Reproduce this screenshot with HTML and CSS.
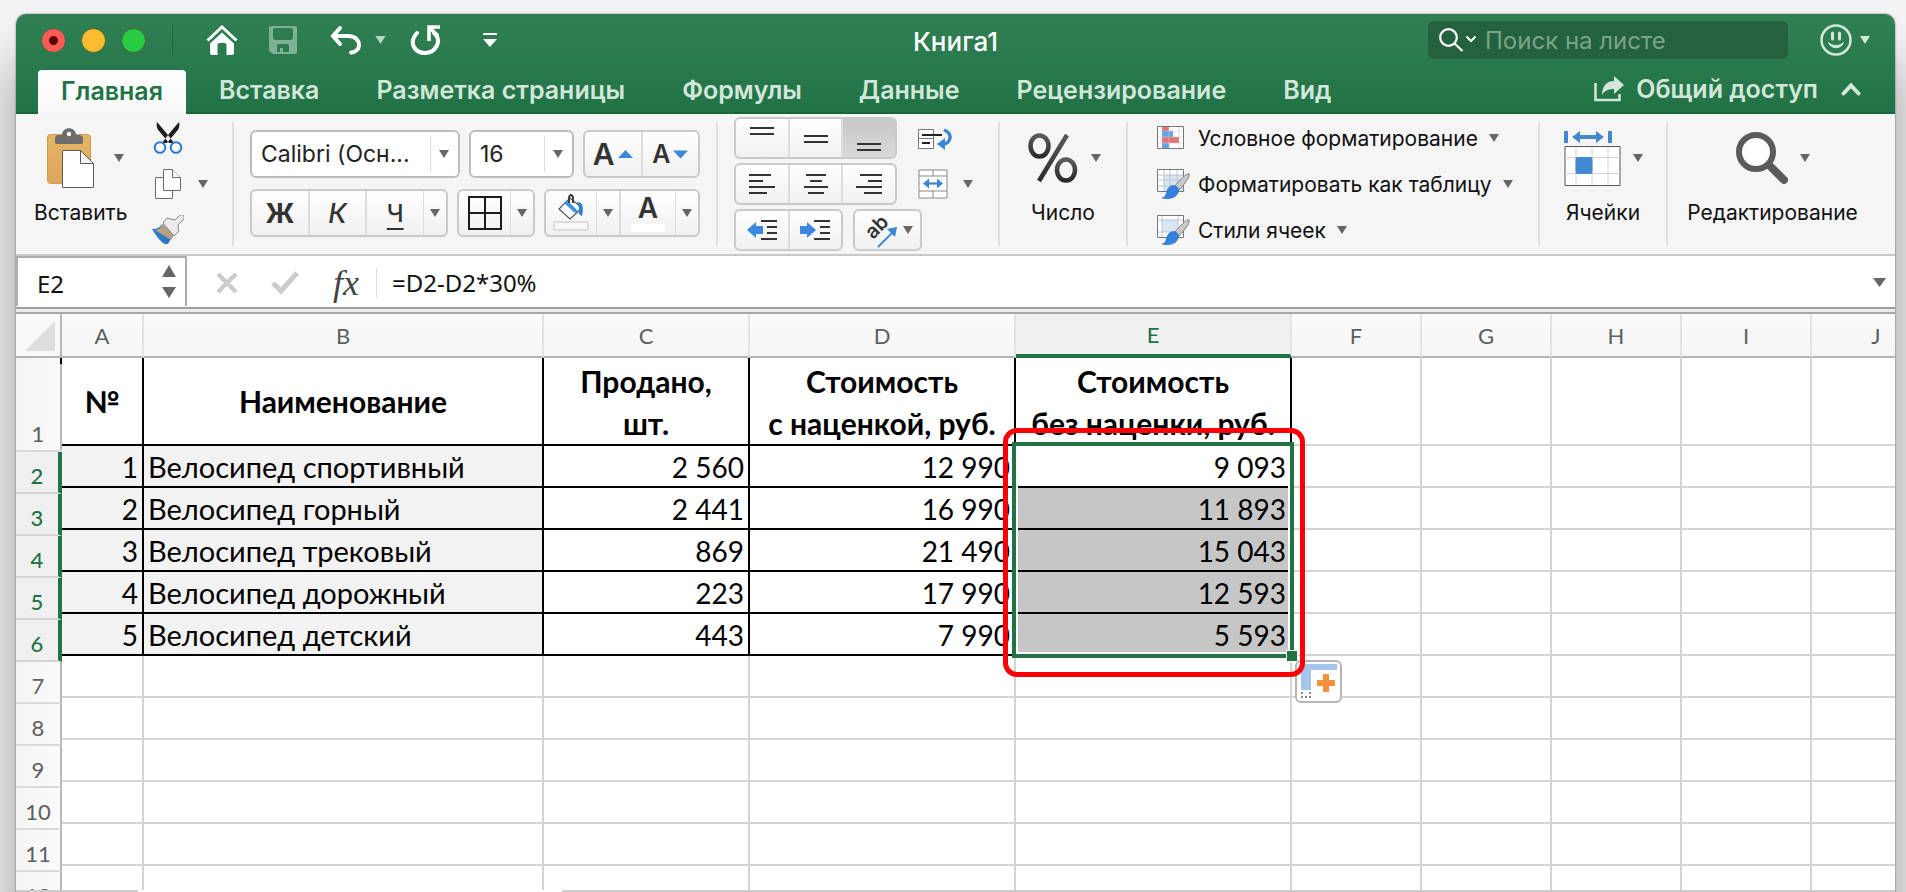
FILE: index.html
```html
<!DOCTYPE html>
<html lang="ru">
<head>
<meta charset="utf-8">
<title>Книга1</title>
<link rel="stylesheet" href="styles.css">
</head>
<body>
<svg width="0" height="0" class="defs" aria-hidden="true">
  <symbol id="tri" viewBox="0 0 10 8"><path d="M0 0h10L5 8z" fill="currentColor"/></symbol>
  <linearGradient id="dark" x1="0" y1="0" x2="0" y2="1"><stop offset="0" stop-color="#5a5a5a"/><stop offset="1" stop-color="#2c2c2c"/></linearGradient>
  <linearGradient id="tan" x1="0" y1="0" x2="0" y2="1"><stop offset="0" stop-color="#e6b467"/><stop offset="1" stop-color="#dba75a"/></linearGradient>
  <symbol id="brush" viewBox="0 0 30 28">
    <path d="M29 1c2 2-7 14-11 17l-4-4C18 9 27-1 29 1z" fill="#c9c9c9" stroke="#7d7d7d" stroke-width="1"/>
    <path d="M13 13c3 0 6 3 5 6-1 6-8 9-17 7 4-1 4-4 5-7 1-4 4-6 7-6z" fill="#3382dd" stroke="#2b6cba" stroke-width=".6"/>
  </symbol>
</svg>
<div class="window">
  <header class="titlebar">
    <div class="top-row">
      <div class="lights">
        <button class="light red" aria-label="Закрыть"></button>
        <button class="light yellow" aria-label="Свернуть"></button>
        <button class="light green" aria-label="Развернуть"></button>
      </div>
      <div class="quick">
        <button aria-label="Домой"><svg width="32" height="30" viewBox="0 0 32 30" fill="none"><path d="M1.500 15.500 16 2l14.500 13.500" stroke="#fff" stroke-width="3"/><path d="M4 18.500 16 7.500l12 11V28q0 2-2 2h-5.500V20q0-2-2-2h-5q-2 0-2 2v10H6q-2 0-2-2z" fill="#fff"/></svg></button>
        <button class="save" aria-label="Сохранить"><svg width="28" height="28" viewBox="0 0 28 28"><path fill-rule="evenodd" d="M2 0h24q2 0 2 2v24q0 2-2 2H4l-4-3V2q0-2 2-2zM6 2Q4 2 4 4v7q0 3 3 3h14q3 0 3-3V4q0-2-2-2zM8 20v6h3v-4h3v4h6v-6q0-2-2-2h-8q-2 0-2 2z" fill="#7eb096"/></svg></button>
        <button class="undo" aria-label="Отменить"><svg width="32" height="30" viewBox="0 0 32 30" fill="none" stroke="#fff" stroke-width="4" stroke-linecap="round"><path d="M10 3 3 11l7 8M4 11h14c8 0 11 5 11 9s-3 7-8 7.500"/></svg></button>
        <button class="undo-menu" aria-label="История отмены"><svg width="11" height="8"><use href="#tri"/></svg></button>
        <button class="redo" aria-label="Повторить"><svg width="32" height="30" viewBox="0 0 32 30" fill="none" stroke="#fff" stroke-width="4"><path d="M7 8c-9 10-2 20 8 20s18-12 9-20"  stroke-linecap="round"/><path d="M30 2H19v14M20 3l8 8" stroke-width="3.600"/></svg></button>
        <button class="more" aria-label="Настройка панели"><svg width="14" height="14" viewBox="0 0 14 14"><path d="M0 0h14v2H0zM0 6h14l-7 8z" fill="#fff"/></svg></button>
      </div>
      <h1>Книга1</h1>
      <label class="search">
        <svg width="38" height="24" viewBox="0 0 38 24" fill="none" stroke="#fff" stroke-width="2.200"><circle cx="9.500" cy="9.500" r="8.300"/><path d="m15.500 15.500 8 7.500"/><path d="m27.500 8.500 4.500 4.500 4.500-4.500" stroke-width="2"/></svg>
        <input type="search" placeholder="Поиск на листе" aria-label="Поиск на листе">
      </label>
      <button class="smile" aria-label="Отзыв"><svg width="32" height="32" viewBox="0 0 32 32" fill="none" stroke="#d3e6da" stroke-width="2.500"><circle cx="16" cy="16" r="14.500"/><path d="M12.500 9v6M19.500 9v6" stroke-width="3" stroke-linecap="round"/><path d="M8.500 18.500c2 7 13 7 15 0-4 4-11 4-15 0z" fill="#d3e6da" stroke-width="1" stroke-linejoin="round"/></svg><svg width="10" height="8"><use href="#tri"/></svg></button>
    </div>
    <nav class="tabs">
      <button class="tab active">Главная</button>
      <button class="tab">Вставка</button>
      <button class="tab">Разметка страницы</button>
      <button class="tab">Формулы</button>
      <button class="tab">Данные</button>
      <button class="tab">Рецензирование</button>
      <button class="tab">Вид</button>
      <button class="share"><svg width="30" height="26" viewBox="0 0 30 26"><path d="M1.500 7v17h24v-6" fill="none" stroke="#d3e6da" stroke-width="2.500"/><path d="M20 0l10 9-10 9v-5c-6 0-10 2-12 6 0-8 4-14 12-14z" fill="#d3e6da"/></svg>Общий доступ</button>
      <button class="collapse" aria-label="Свернуть ленту"><svg width="20" height="14" viewBox="0 0 20 14"><path d="m2.500 11.500 7.500-8 7.500 8" fill="none" stroke="#d3e6da" stroke-width="4" stroke-linecap="round"/></svg></button>
    </nav>
  </header>

  <section class="ribbon" aria-label="Главная">
    <div class="group clipboard">
      <button class="big"><span class="pic"><svg width="48" height="60" viewBox="0 0 48 60"><rect x=".5" y="6.500" width="43" height="49" rx="3" fill="url(#tan)" stroke="#cf9a4c"/><path d="M8 15V11q0-4 4-4h3c0-9 14-9 14 0h3q4 0 4 4v4q0 1-2 1H10q-2 0-2-1z" fill="#6d6d6d"/><circle cx="22" cy="6" r="2.200" fill="#fff"/><path d="M15.500 22.500h18l13 13v24h-31z" fill="#fff" stroke="#5a5a5a"/><path d="M33.500 22.500v13h13z" fill="#f4f4f4" stroke="#5a5a5a"/></svg><svg class="arrow" width="10" height="8"><use href="#tri"/></svg></span>Вставить</button>
      <div class="mini">
        <button aria-label="Вырезать"><svg width="32" height="32" viewBox="0 0 32 32"><path d="M5 0C4 3 5 7 7 9l10 12h5L16 13zM27 0c1 3 0 7-2 9L15 21h-5l6-8z" fill="#1d1d1d"/><g fill="#fff" stroke="#2f7ad1" stroke-width="2"><circle cx="8" cy="25.500" r="5.300"/><circle cx="24" cy="25.500" r="5.300"/></g></svg></button>
        <button aria-label="Копировать"><svg width="32" height="32" viewBox="0 0 32 32" fill="#fff" stroke="#6a6a6a"><path d="M3.500 9.500h17v21h-17z"/><path d="M11.500 1.500h9l8 8v13h-17z"/><path d="M20.500 1.500v8h8"/></svg><svg class="arrow" width="10" height="8"><use href="#tri"/></svg></button>
        <button aria-label="Формат по образцу"><svg width="32" height="30" viewBox="0 0 32 30"><path d="M0 14c4 0 8-1 10-5l11 11c-1 4-4 6-5 9-4 0-4 0-6-2C6 24 4 20 0 14z" fill="#2e79c6"/><path d="M3 15c4 0 6-3 8-6l11 11-3 5z" fill="#b5a084"/><path d="m11 8 4-5q6 2 8 2l4-4c3-3 7 0 4 4l-5 5q0 5 1 6l-5 5z" fill="#ececec" stroke="#858585"/></svg></button>
      </div>
    </div>
    <i class="sep"></i>
    <div class="group font">
      <div class="line">
        <span class="combo name"><select aria-label="Шрифт"><option>Calibri (Осн...</option></select><svg class="arrow" width="10" height="8"><use href="#tri"/></svg></span>
        <span class="combo size"><select aria-label="Размер"><option>16</option></select><svg class="arrow" width="10" height="8"><use href="#tri"/></svg></span>
        <div class="set sized">
          <button aria-label="Увеличить шрифт"><b class="grow">A</b><svg width="15" height="8" viewBox="0 0 15 8"><path d="M0 8 7.500 0 15 8z" fill="#3b87d6"/></svg></button>
          <button aria-label="Уменьшить шрифт"><b class="shrink">A</b><svg width="15" height="9" viewBox="0 0 15 8"><path d="M0 0h15L7.500 8z" fill="#3b87d6"/></svg></button>
        </div>
      </div>
      <div class="line">
        <div class="set style">
          <button><b>Ж</b></button><button><em>К</em></button><button><u>Ч</u></button><button class="drop" aria-label="Подчёркивание"><svg class="arrow" width="10" height="8"><use href="#tri"/></svg></button>
        </div>
        <div class="set borders">
          <button aria-label="Границы"><svg width="34" height="34" viewBox="0 0 34 34"><path d="M1 1h32v32H1zM17 1v32M1 17h32" fill="none" stroke="#1b1b1b" stroke-width="2"/></svg></button><button class="drop" aria-label="Выбор границ"><svg class="arrow" width="10" height="8"><use href="#tri"/></svg></button>
        </div>
        <div class="set colors">
          <button aria-label="Цвет заливки"><svg width="36" height="38" viewBox="0 0 36 38"><path d="m6 15 11-11 12 10-12 11z" fill="#fff" stroke="#555" stroke-width="1.200"/><path d="m11 9 11 10 3-2L14 6z" fill="#3d93dd"/><path d="M24 8c6 0 7 6 5 14-3-1-4-3-3-8z" fill="#2f7fd3"/><path d="M16 9V3q2-4 4 0v6" fill="none" stroke="#333" stroke-width="1.800"/><rect x="1" y="28" width="34" height="8" rx="1" fill="#f7f7f7" stroke="#d5d5d5" stroke-width="1.500"/></svg></button><button class="drop" aria-label="Выбор заливки"><svg class="arrow" width="10" height="8"><use href="#tri"/></svg></button>
          <button class="ink" aria-label="Цвет текста"><b>A</b><i></i></button><button class="drop" aria-label="Выбор цвета текста"><svg class="arrow" width="10" height="8"><use href="#tri"/></svg></button>
        </div>
      </div>
    </div>
    <i class="sep"></i>
    <div class="group align">
      <div class="line">
        <div class="set tri3">
          <button aria-label="По верхнему краю"><svg width="26" height="42" viewBox="0 0 26 42"><path d="M1 11h24M1 17h24" stroke="#333" stroke-width="2"/></svg></button><button aria-label="По середине"><svg width="26" height="42" viewBox="0 0 26 42"><path d="M1 19h24M1 25h24" stroke="#333" stroke-width="2"/></svg></button><button class="on" aria-label="По нижнему краю"><svg width="26" height="42" viewBox="0 0 26 42"><path d="M1 27h24M1 33h24" stroke="#333" stroke-width="2"/></svg></button>
        </div>
        <button class="plain" aria-label="Перенос текста"><svg width="34" height="24" viewBox="0 0 34 24"><path d="M.5 3.500h15v19H.5zM.5 12.500h15" fill="#fff" stroke="#777"/><path d="M4 9h20M4 17h8" stroke="#222" stroke-width="2"/><path d="M26 4c10 4 6 14-1 14" fill="none" stroke="#3b87d6" stroke-width="3.500"/><path d="m19 18 8-6v12z" fill="#3b87d6"/></svg></button>
      </div>
      <div class="line">
        <div class="set tri3">
          <button aria-label="По левому краю"><svg width="26" height="22" viewBox="0 0 26 22"><path d="M0 2h22M0 8h14M0 14h26M0 20h18" stroke="#333" stroke-width="2"/></svg></button><button aria-label="По центру"><svg width="26" height="22" viewBox="0 0 26 22"><path d="M3 2h20M7 8h12M1 14h24M5 20h16" stroke="#333" stroke-width="2"/></svg></button><button aria-label="По правому краю"><svg width="26" height="22" viewBox="0 0 26 22"><path d="M4 2h22M12 8h14M0 14h26M8 20h18" stroke="#333" stroke-width="2"/></svg></button>
        </div>
        <button class="plain" aria-label="Объединить ячейки"><svg width="30" height="30" viewBox="0 0 30 30"><path d="M1 1h28v28H1zM1 7h28M1 22h28M15 1v6M15 22v7" fill="#fff" stroke="#888"/><path d="M8 14.500h14" stroke="#3b87d6" stroke-width="2.200"/><path d="m5 14.500 6-5v10zM25 14.500l-6-5v10z" fill="#3b87d6"/></svg><svg class="arrow" width="10" height="8"><use href="#tri"/></svg></button>
      </div>
      <div class="line">
        <div class="set two">
          <button aria-label="Уменьшить отступ"><svg width="30" height="22" viewBox="0 0 30 22"><path d="M0 11 9 3v4h7v8H9v4z" fill="#3b87e2"/><path d="M14 2h16M20 8h10M20 14h10M14 20h16" stroke="#333" stroke-width="2"/></svg></button><button aria-label="Увеличить отступ"><svg width="30" height="22" viewBox="0 0 30 22"><path d="M16 11 7 3v4H0v8h7v4z" fill="#3b87e2"/><path d="M14 2h16M20 8h10M20 14h10M14 20h16" stroke="#333" stroke-width="2"/></svg></button>
        </div>
        <div class="set turn">
          <button aria-label="Ориентация"><svg width="36" height="36" viewBox="0 0 36 36"><text x="11" y="28" transform="rotate(-45 11 28)" class="ab">ab</text><path d="m16 35 15-15" stroke="#3b87d6" stroke-width="2"/><path d="M35 15 25 17l8 8z" fill="#3b87d6"/></svg><svg class="arrow" width="10" height="8"><use href="#tri"/></svg></button>
        </div>
      </div>
    </div>
    <i class="sep"></i>
    <div class="group number">
      <button class="big"><span class="pic"><svg width="50" height="50" viewBox="0 0 50 50" fill="none" stroke="url(#dark)"><ellipse cx="11.500" cy="13" rx="9" ry="10.500" stroke-width="4.500"/><ellipse cx="38" cy="37" rx="9" ry="10.500" stroke-width="4.500"/><path d="M39 2 11 48" stroke-width="4.500"/></svg><svg class="arrow" width="10" height="8"><use href="#tri"/></svg></span>Число</button>
    </div>
    <i class="sep"></i>
    <div class="group styles">
      <button><svg width="34" height="32" viewBox="0 0 34 32"><path d="M1 4h27v23H1z" fill="#fff"/><path d="M6 4h7v5H6zM6 15h17v6H6z" fill="#e87070"/><path d="M6 9h11v6H6zM6 21h7v6H6z" fill="#5ba4ea"/><path d="M6 4v23M13 4v23M23 4v23M1 9h27M1 15h27M1 21h27" stroke="#c9c9c9" stroke-width=".6"/><path d="M1.500 4.500h26v22h-26z" fill="none" stroke="#777"/></svg>Условное форматирование<svg class="arrow" width="10" height="8"><use href="#tri"/></svg></button>
      <button><svg width="34" height="32" viewBox="0 0 34 32"><path d="M1.500 1.500h26v22h-26z" fill="#fff" stroke="#777"/><path d="M8 7h19v16H8z" fill="#d7e5f4"/><path d="M8 2v21M14 2v21M21 2v21M2 7h25M2 12h25M2 18h25" stroke="#bcc6cf"/><use href="#brush" x="5" y="5" width="29" height="27"/></svg>Форматировать как таблицу<svg class="arrow" width="10" height="8"><use href="#tri"/></svg></button>
      <button><svg width="34" height="32" viewBox="0 0 34 32"><path d="M1.500 1.500h26v22h-26z" fill="#fff" stroke="#777"/><path d="M6 6h16v12H6z" fill="#d7e5f4"/><path d="M6 2v21M22 2v21M2 6h25M2 18h25" stroke="#bcc6cf"/><use href="#brush" x="5" y="5" width="29" height="27"/></svg>Стили ячеек<svg class="arrow" width="10" height="8"><use href="#tri"/></svg></button>
    </div>
    <i class="sep"></i>
    <div class="group cells">
      <button class="big"><span class="pic"><svg width="58" height="58" viewBox="0 0 58 58"><path d="M1 2h4v12H1zM45 2h4v12h-4zM9 8l8-6v4h16V2l8 6-8 6v-4H17v4z" fill="#4389cf"/><path d="M2 17.500h55v39H2z" fill="#fff" stroke="#555"/><path d="M13 18v38M29 18v38M45 18v38M2 28.500h55M2 44.500h55" stroke="#d2d2d2"/><rect x="12.500" y="28" width="17" height="17" rx="2" fill="#4389cf"/></svg><svg class="arrow" width="10" height="8"><use href="#tri"/></svg></span>Ячейки</button>
    </div>
    <i class="sep"></i>
    <div class="group edit">
      <button class="big"><span class="pic"><svg width="52" height="54" viewBox="0 0 52 54" fill="none" stroke="#5b5b5b"><path d="M35 36 48 49" stroke-width="8" stroke-linecap="round"/><circle cx="20" cy="21" r="17" stroke-width="6" fill="#fff"/></svg><svg class="arrow" width="10" height="8"><use href="#tri"/></svg></span>Редактирование</button>
    </div>
  </section>

  <section class="formula-bar">
    <div class="namebox"><input value="E2" aria-label="Имя ячейки"><button aria-label="Список имён"><svg width="14" height="34" viewBox="0 0 14 34"><path d="M7 0l7 12H0zM0 22h14L7 33z" fill="#666"/></svg></button></div>
    <button class="cancel" aria-label="Отмена"><svg width="24" height="24" viewBox="0 0 24 24"><path d="m3 3 18 18M21 3 3 21" stroke="#ccc" stroke-width="4.500"/></svg></button>
    <button class="enter" aria-label="Ввод"><svg width="28" height="24" viewBox="0 0 28 24"><path d="m2 12 8 8L26 2" fill="none" stroke="#ccc" stroke-width="5"/></svg></button>
    <button class="fx" aria-label="Вставить функцию"><i>fx</i></button>
    <input class="formula" value="=D2-D2*30%" aria-label="Строка формул">
    <button class="expand" aria-label="Развернуть строку"><svg width="13" height="9" viewBox="0 0 10 8" preserveAspectRatio="none"><path d="M0 0h10L5 8z" fill="#666"/></svg></button>
  </section>

  <main class="sheet">
    <div class="rows">
      <div class="corner"><svg width="30" height="30" viewBox="0 0 30 30"><path d="M30 0v30H0z" fill="#dedede"/></svg></div>
      <ol>
        <li class="first">1</li><li class="sel">2</li><li class="sel">3</li><li class="sel">4</li><li class="sel">5</li><li class="sel">6</li><li>7</li><li>8</li><li>9</li><li>10</li><li>11</li><li>12</li>
      </ol>
    </div>
    <div class="grid">
      <table>
        <colgroup><col class="ca"><col class="cb"><col class="cc"><col class="cd"><col class="ce"><col><col><col><col><col></colgroup>
        <thead><tr><th>A</th><th>B</th><th>C</th><th>D</th><th class="sel">E</th><th>F</th><th>G</th><th>H</th><th>I</th><th>J</th></tr></thead>
        <tbody>
          <tr class="head"><td class="mid">№</td><td class="mid">Наименование</td><td>Продано,<br>шт.</td><td>Стоимость<br>с наценкой, руб.</td><td>Стоимость<br>без наценки, руб.</td><td></td><td></td><td></td><td></td><td></td></tr>
          <tr class="data"><td>1</td><td>Велосипед спортивный</td><td>2 560</td><td>12 990</td><td class="anchor">9 093<div class="selection"><i></i></div><button class="autofill" aria-label="Параметры автозаполнения"><svg width="38" height="36" viewBox="0 0 38 36"><path d="M0 0h36v6H10v20H0z" fill="#a3c4ec"/><path d="M16 16h6v-6h6v6h6v6h-6v6h-6v-6h-6z" fill="#f5913c"/><path d="M0 28h2v2H0zM4 32h2v2H4zM0 32h2v2H0zM8 32h2v2H8zM8 28h2v2H8z" fill="#888"/></svg></button><div class="callout"></div></td><td></td><td></td><td></td><td></td><td></td></tr>
          <tr class="data"><td>2</td><td>Велосипед горный</td><td>2 441</td><td>16 990</td><td class="picked">11 893</td><td></td><td></td><td></td><td></td><td></td></tr>
          <tr class="data"><td>3</td><td>Велосипед трековый</td><td>869</td><td>21 490</td><td class="picked">15 043</td><td></td><td></td><td></td><td></td><td></td></tr>
          <tr class="data"><td>4</td><td>Велосипед дорожный</td><td>223</td><td>17 990</td><td class="picked">12 593</td><td></td><td></td><td></td><td></td><td></td></tr>
          <tr class="data"><td>5</td><td>Велосипед детский</td><td>443</td><td>7 990</td><td class="picked">5 593</td><td></td><td></td><td></td><td></td><td></td></tr>
          <tr><td></td><td></td><td></td><td></td><td></td><td></td><td></td><td></td><td></td><td></td></tr>
          <tr><td></td><td></td><td></td><td></td><td></td><td></td><td></td><td></td><td></td><td></td></tr>
          <tr><td></td><td></td><td></td><td></td><td></td><td></td><td></td><td></td><td></td><td></td></tr>
          <tr><td></td><td></td><td></td><td></td><td></td><td></td><td></td><td></td><td></td><td></td></tr>
          <tr><td></td><td></td><td></td><td></td><td></td><td></td><td></td><td></td><td></td><td></td></tr>
          <tr><td></td><td></td><td></td><td></td><td></td><td></td><td></td><td></td><td></td><td></td></tr>
        </tbody>
      </table>
    </div>
  </main>
  <div class="bottom-edge"><i></i><i></i></div>
</div>
</body>
</html>
```

FILE: styles.css
```css
* { box-sizing: border-box; }
body {
  margin: 0;
  height: 100vh;
  padding: 14px 11px 0 16px;
  overflow: hidden;
  background: #f3f2f4;
  font-family: Inter, "Noto Sans", sans-serif;
  color: #111;
}
button {
  margin: 0;
  padding: 0;
  border: 0;
  background: none;
  font: inherit;
  color: inherit;
  display: flex;
  align-items: center;
  justify-content: center;
}
svg { display: block; flex: none; }
input, select { font: inherit; color: inherit; border: 0; padding: 0; background: none; outline: 0; min-width: 0; }
.defs { position: absolute; }
.window {
  height: 100%;
  display: flex;
  flex-direction: column;
  background: #fff;
  border-radius: 10px 10px 0 0;
  box-shadow: 0 0 2px rgba(0, 0, 0, .6), 0 60px 50px 12px rgba(0, 0, 0, .26);
}

/* Title bar */
.titlebar {
  background: linear-gradient(#308054, #217346);
  border-bottom: 2px solid #1b6339;
  border-radius: 10px 10px 0 0;
  color: #d3e6da;
}
.top-row { position: relative; display: flex; align-items: center; height: 52px; padding: 0 25px 0 25px; }
.lights { display: flex; gap: 15px; padding-right: 26px; margin-right: 33px; border-right: 1px solid #24663f; height: 30px; align-items: center; }
.light { width: 25px; height: 25px; border-radius: 50%; border: 1px solid #3e6b3d; }
.red { background: radial-gradient(circle, #5a0000 4px, #fc5b56 5px); }
.yellow { background: #fdbc2f; }
.green { background: #28cb42; }
.quick { display: flex; align-items: center; color: #b9d6c5; }
.save { margin-left: 31px; }
.undo { margin-left: 33px; }
.undo-menu { margin-left: 13px; }
.redo { margin-left: 24px; }
.more { margin-left: 41px; color: #fff; }
h1 {
  position: absolute;
  left: 0;
  right: 0;
  text-align: center;
  margin: 0;
  padding-top: 3px;
  font-size: 26px;
  line-height: 30px;
  font-weight: 500;
  color: #fff;
  pointer-events: none;
}
.search {
  display: flex;
  align-items: center;
  gap: 8px;
  margin-left: auto;
  width: 360px;
  height: 38px;
  padding: 0 11px;
  border-radius: 6px;
  background: #24613f;
}
.search input { flex: 1; font-size: 24px; color: #fff; appearance: none; }
.search input::placeholder { color: #79a489; opacity: 1; }
.smile { gap: 8px; margin-left: 32px; }
.tabs { display: flex; align-items: stretch; gap: 1px; height: 46px; padding: 0 34px 0 22px; font-size: 25px; font-weight: 600; }
.tab { padding: 2px 28px 0; }
.tab.active { color: #217346; background: linear-gradient(#fff, #f8f8f8); border-radius: 4px 4px 0 0; padding: 0 23px 2px; margin: 4px 4px -2px 0; }
.share { gap: 12px; margin-left: auto; }
.collapse { margin-left: 22px; }

/* Ribbon */
.ribbon { display: flex; align-items: center; height: 142px; background: #f5f5f5; border-bottom: 2px solid #c8c8c8; color: #111; font-size: 21px; }
.sep { width: 2px; height: 124px; background: #e0e0e0; flex: none; }
.group { height: 138px; flex: none; }
.arrow { color: #666; }
.big { flex-direction: column; line-height: 26px; padding-top: 12px; }
.pic { display: flex; align-items: center; gap: 12px; height: 62px; margin-bottom: 11px; }
.clipboard { width: 216px; display: flex; padding-left: 18px; align-items: flex-start; }
.clipboard .pic { gap: 19px; padding-left: 9px; }
.mini { margin-left: 25px; display: flex; flex-direction: column; }
.mini button { height: 46px; gap: 14px; justify-content: flex-start; }
.font { width: 482px; padding: 15px 0 0 16px; display: flex; flex-direction: column; gap: 11px; }
.line { display: flex; gap: 9px; }
.font .line { height: 48px; }
.combo { position: relative; display: flex; align-items: center; height: 48px; background: #fff; border: 2px solid #bdbdbd; border-radius: 6px; }
.combo select { appearance: none; width: 100%; height: 100%; padding-left: 9px; font-size: 23px; color: #222; }
.combo .arrow { position: absolute; right: 9px; pointer-events: none; }
.combo::after { content: ""; position: absolute; right: 27px; top: 4px; bottom: 4px; width: 1px; background: #ddd; pointer-events: none; }
.name { width: 210px; }
.size { width: 105px; }
.set { display: flex; border: 2px solid #cacaca; border-radius: 6px; background: linear-gradient(#fefefe, #f1f1f1); color: #333; overflow: hidden; }
.set button { flex: 1; }
.set button + button { border-left: 2px solid #dcdcdc; }
.set .drop { flex: none; width: 23px; }
.set button + .drop { border-left: 1px solid #ddd; }
.sized { width: 117px; }
.sized button { gap: 3px; }
.grow { font-size: 30px; font-weight: 600; }
.shrink { font-size: 25px; font-weight: 600; }
.style { width: 198px; font-size: 27px; }
.style em { font-weight: 500; }
.style u { font-weight: 500; font-size: 24px; text-underline-offset: 6px; text-decoration-thickness: 2px; }
.borders { width: 78px; }
.colors { width: 156px; }
.set .ink { flex: none; width: 56px; flex-direction: column; font-size: 28px; line-height: 26px; }
.ink b { font-weight: 600; }
.ink i { width: 34px; height: 8px; background: #fff; margin-top: 3px; }
.align { width: 280px; padding: 2px 0 0 16px; display: flex; flex-direction: column; gap: 4px; }
.align .line { gap: 10px; }
.align .set { height: 42px; }
.tri3 { width: 163px; }
.tri3 .on { background: linear-gradient(#c8c8c8, #d9d9d9); }
.two { width: 109px; }
.turn { width: 69px; overflow: visible; }
.turn button { gap: 5px; }
.turn svg { overflow: visible; }
.ab { font-size: 20px; font-weight: 600; fill: #333; }
.plain { gap: 15px; padding-left: 11px; }
.number, .cells { width: 126px; display: flex; justify-content: center; align-items: flex-start; }
.number .pic { gap: 13px; padding-left: 2px; }
.styles { width: 410px; padding-left: 28px; }
.styles button { height: 46px; gap: 8px; }
.styles .arrow { margin-left: 3px; }
.edit { flex: 1; display: flex; justify-content: center; align-items: flex-start; padding-right: 18px; }

/* Formula bar */
.formula-bar { display: flex; align-items: center; height: 58px; padding-bottom: 3px; border-bottom: 2px solid #a8a8a8; background: linear-gradient(#fff, #fff 51px, #a0a0a0 51px, #a0a0a0 53px, #ececec 53px); font-family: "Noto Sans", sans-serif; font-size: 24px; color: #111; }
.namebox { display: flex; align-items: center; width: 171px; height: 50px; border: 2px solid #adadad; border-bottom: 0; padding: 0 9px 0 19px; align-self: flex-start; }
.namebox input { flex: 1; padding-top: 2px; }
.cancel { margin-left: 28px; }
.enter { margin-left: 32px; }
.fx { margin-left: 34px; font: 36px/36px "Liberation Serif", serif; color: #444; }
.formula { flex: 1; margin-left: 17px; padding-left: 15px; height: 30px; border-left: 1px solid #ddd; }
.expand { margin-right: 9px; }

/* Sheet */
.sheet { flex: 1; min-height: 0; display: flex; overflow: hidden; font-family: Lato, "Noto Sans", sans-serif; }
.rows { flex: none; width: 46px; background: linear-gradient(90deg, #f4f4f4, #fbfbfb); }
.corner { height: 44px; border-right: 2px solid #b8b8b8; border-bottom: 2px solid #b4b4b4; display: flex; align-items: flex-end; justify-content: flex-end; padding: 0 5px 5px 0; background: #f9f9f9; }
.rows ol { list-style: none; margin: 0; padding: 0; font-size: 22px; line-height: 26px; color: #5c5f61; }
.rows li { height: 42px; display: flex; align-items: flex-end; justify-content: center; padding-bottom: 3px; border-right: 2px solid #b8b8b8; border-bottom: 2px solid #dadada; }
.rows .first { height: 94px; border-right: 0; padding-right: 2px; background: linear-gradient(#000 6px, #b8b8b8 6px) right / 2px 100% no-repeat; }
.rows .sel { color: #217346; font-weight: 500; border-right: 4px solid #217346; border-bottom-color: #d4d4d4; background: #f0f0f0; }
.grid { flex: 1; min-width: 0; overflow: hidden; }
table { table-layout: fixed; width: 1880px; border-collapse: separate; border-spacing: 0; }
col { width: 130px; }
.ca { width: 82px; }
.cb { width: 400px; }
.cc { width: 206px; }
.cd { width: 266px; }
.ce { width: 276px; }
th { height: 44px; padding: 0; font-size: 22px; font-weight: 400; color: #5c5f61; background: linear-gradient(#fbfbfb, #f5f5f5); border-right: 2px solid #e2e2e2; border-bottom: 2px solid #b4b4b4; }
th.sel { color: #217346; background: #f0f0f0; border-bottom: 4px solid #217346; }
td { height: 42px; padding: 2px 4px 0; border-right: 2px solid #d4d4d4; border-bottom: 2px solid #d4d4d4; font-size: 28px; line-height: 38px; color: #000; white-space: nowrap; }
.head td { height: 88px; padding: 0; font-size: 30px; line-height: 42px; font-weight: 700; text-align: center; vertical-align: bottom; }
.head .mid { vertical-align: middle; }
.head td:nth-child(-n+5), .data td:nth-child(-n+5) { border-color: #000; }
.data td { text-align: right; }
.data td:nth-child(-n+2) { background: #f2f2f2; }
.data td:nth-child(2) { text-align: left; font-size: 29px; }
.data .picked { background: #c6c6c6; }
.anchor { position: relative; }
.selection { position: absolute; z-index: 2; left: -4px; right: -4px; top: -4px; height: 216px; border: 4px solid #217346; box-shadow: inset 0 0 0 2px #fff; }
.selection i { position: absolute; right: -8px; bottom: -8px; width: 12px; height: 12px; background: #217346; border: 1px solid #fff; }
.callout { position: absolute; z-index: 4; left: -13px; right: -15px; top: -18px; height: 249px; border: 5px solid #fb0007; border-radius: 14px; }
.autofill { position: absolute; z-index: 3; left: 279px; top: 214px; width: 47px; height: 43px; background: #fff; border: 2px solid #b5b5b5; border-radius: 6px; padding-left: 2px; }
.bottom-edge { display: flex; height: 2px; }
.bottom-edge i { width: 122px; background: #ccc; }
.bottom-edge i + i { flex: 1; margin-left: 424px; }
```
